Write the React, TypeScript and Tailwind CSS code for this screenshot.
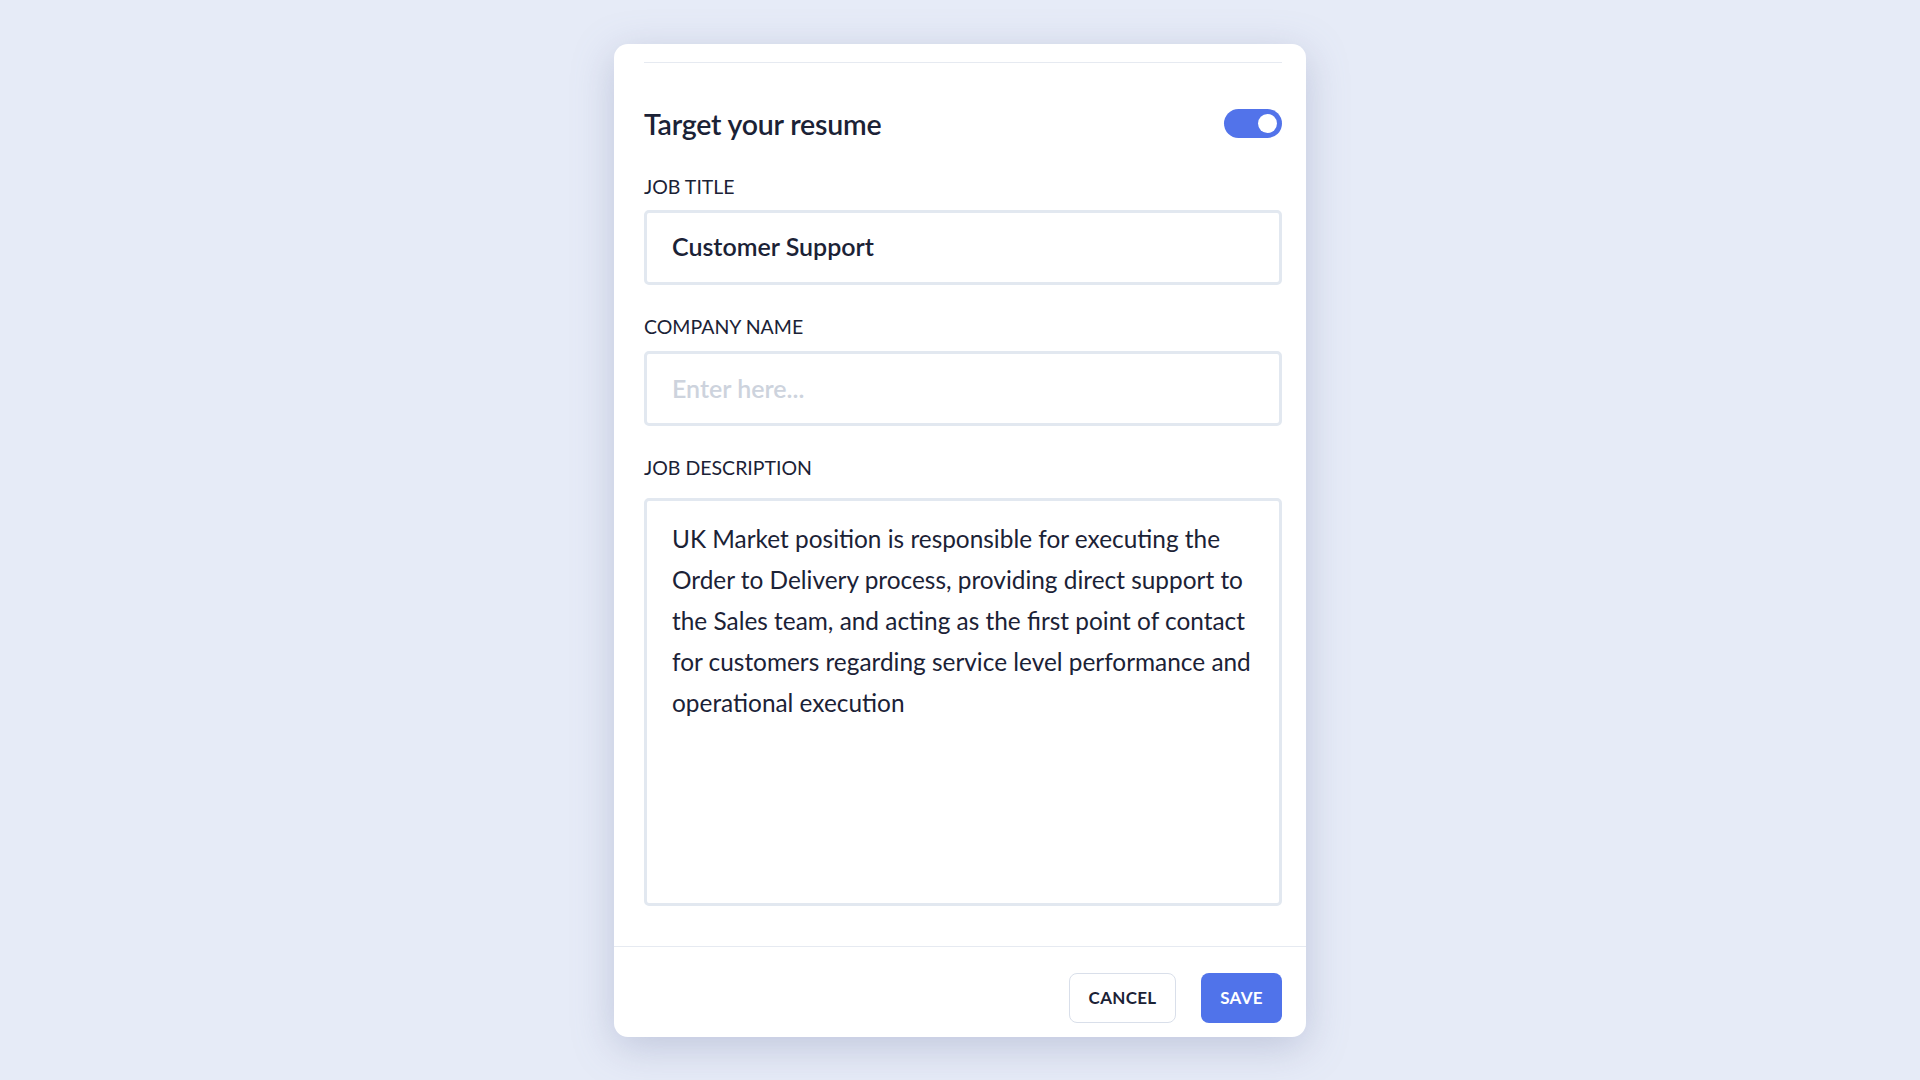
import { useState } from 'react';

const descriptionLines = [
  'UK Market position is responsible for executing the',
  'Order to Delivery process, providing direct support to',
  'the Sales team, and acting as the first point of contact',
  'for customers regarding service level performance and',
  'operational execution',
];

export default function App() {
  const [enabled, setEnabled] = useState(true);

  return (
    <div className="min-h-screen bg-[#e6ebf7] flex items-center justify-center font-['Lato',sans-serif] text-[#1b2236]">
      <div className="w-[692px] bg-white rounded-[14px] shadow-[0_10px_40px_rgba(120,130,170,0.35)]">
        <div className="pl-[30px] pr-[24px] pt-[18px] pb-[40px]">
          <div className="border-t border-[#e6eaf1]" />

          {/* header */}
          <div className="flex items-center justify-between mt-[45px]">
            <h2 className="text-[28.5px] leading-[32px] font-semibold tracking-[-0.2px]">Target your resume</h2>
            <button
              onClick={() => setEnabled(!enabled)}
              className={`w-[58px] h-[29px] rounded-full flex items-center px-[5px] ${
                enabled ? 'bg-[#5273ea] justify-end' : 'bg-[#cfd6e4] justify-start'
              }`}
            >
              <span className="w-[19px] h-[19px] rounded-full bg-white" />
            </button>
          </div>

          {/* job title */}
          <label className="block mt-[35px] text-[19.5px] leading-[24px] uppercase">Job title</label>
          <div className="mt-[11px] h-[75px] border-[3px] border-[#e2e8f0] rounded-[5px] flex items-center px-[25px]">
            <span className="text-[25px] font-semibold">Customer Support</span>
          </div>

          {/* company */}
          <label className="block mt-[30px] text-[19.5px] leading-[24px] uppercase">Company name</label>
          <input
            placeholder="Enter here..."
            className="mt-[12px] w-full h-[75px] border-[3px] border-[#e2e8f0] rounded-[5px] px-[25px] text-[25px] font-semibold outline-none placeholder:text-[#cdd3dd]"
          />

          {/* description */}
          <label className="block mt-[30px] text-[19.5px] leading-[24px] uppercase">Job description</label>
          <div className="mt-[18px] h-[408px] border-[3px] border-[#e2e8f0] rounded-[5px] px-[25px] pt-[17px] text-[24.4px] leading-[41px]">
            {descriptionLines.map((line) => (
              <div key={line} className="whitespace-nowrap">{line}</div>
            ))}
          </div>
        </div>

        {/* footer */}
        <div className="border-t border-[#e6eaf1] flex justify-end gap-[25px] px-[24px] pt-[26px] pb-[14px]">
          <button className="h-[50px] w-[107px] rounded-[8px] border border-[#d9dfea] bg-white text-[17px] font-bold tracking-[0.3px]">
            CANCEL
          </button>
          <button className="h-[50px] w-[81px] rounded-[8px] bg-[#5073ea] text-white text-[17px] font-bold tracking-[0.3px]">
            SAVE
          </button>
        </div>
      </div>
    </div>
  );
}
